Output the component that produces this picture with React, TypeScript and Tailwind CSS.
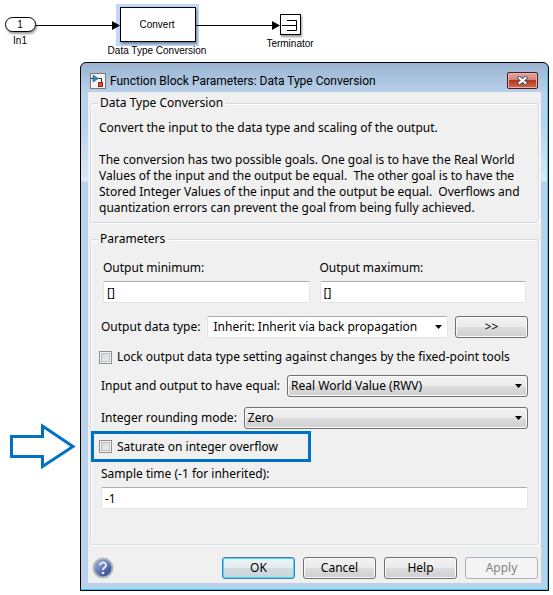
import type { ReactNode } from 'react';

function Diagram() {
  return (
    <svg className="block h-[62px] w-[330px] font-['Liberation_Sans',Arial,sans-serif] text-[10px]" viewBox="0 0 330 62" role="img" aria-label="Model diagram">
      <defs>
        <filter id="shadow" x="-20%" y="-20%" width="150%" height="160%">
          <feDropShadow dx="1" dy="2" stdDeviation="1" floodColor="#000" floodOpacity="0.4" />
        </filter>
      </defs>
      <rect x="116" y="4" width="83" height="42" fill="#bfd9fb" />
      <g fill="#fff" stroke="#000">
        <rect x="5.500" y="17.500" width="30" height="14" rx="7" filter="url(#shadow)" />
        <rect x="120.500" y="7.500" width="75" height="34" filter="url(#shadow)" />
        <rect x="280.500" y="14.500" width="20" height="20" filter="url(#shadow)" />
      </g>
      <path d="M36 25.500H113M196 25.500H273" stroke="#000" />
      <path d="M112 21L120 25.500L112 30ZM272 21L280 25.500L272 30Z" />
      <path d="M282 25.500H296M287 20.500H296.500V30.500H287" fill="none" stroke="#000" />
      <g textAnchor="middle" fill="#000">
        <text x="20" y="28">1</text>
        <text x="20" y="44">In1</text>
        <text x="157" y="28">Convert</text>
        <text x="157" y="54">Data Type Conversion</text>
        <text x="290" y="47">Terminator</text>
      </g>
    </svg>
  );
}

function Group({ title, className, children }: { title: string; className: string; children: ReactNode }) {
  return (
    <fieldset className={`min-w-0 rounded-[3px] border border-[#d2dce6] shadow-[inset_1px_1px_0_#fff,1px_1px_0_#fff] ${className}`}>
      <legend className="ml-[7px] h-4 bg-[#f0f0f0] px-[2px] leading-4">{title}</legend>
      {children}
    </fieldset>
  );
}

const grey = 'bg-[linear-gradient(#f2f2f2_0%,#ebebeb_49%,#dddddd_50%,#cfcfcf_100%)]';
const field = 'h-[22px] w-full rounded-[2px] border border-[#dfe3ea] border-t-[#abadb3] bg-white px-[3px]';

function Drop({ id, value, white }: { id: string; value: string; white?: boolean }) {
  return (
    <div className="relative min-w-0 flex-1">
      <select
        id={id}
        className={`block h-[22px] w-full appearance-none border ${
          white
            ? 'rounded-[2px] border-[#dfe3ea] border-t-[#abadb3] bg-white pl-[5px]'
            : `rounded-[3px] border-[#707070] pl-[3px] shadow-[inset_0_0_0_1px_#fafafa] ${grey}`
        }`}
      >
        <option>{value}</option>
      </select>
      <svg className="pointer-events-none absolute right-[6px] top-[9px] h-1 w-[7px]" viewBox="0 0 7 4">
        <path d="M0 0H7L3.500 4Z" />
      </svg>
    </div>
  );
}

function Check({ id }: { id: string }) {
  return (
    <input
      id={id}
      type="checkbox"
      className="size-[13px] shrink-0 appearance-none border border-[#8e8f8f] bg-[linear-gradient(135deg,#cbcfd5,#f6f6f6)] shadow-[inset_0_0_0_1px_#f4f4f4,inset_0_0_0_2px_#b9bdc4]"
    />
  );
}

function Push({ children, look }: { children: ReactNode; look: 'normal' | 'primary' | 'disabled' }) {
  const looks = {
    normal: `border-[#707070] shadow-[inset_0_0_0_1px_#fafafa] ${grey}`,
    primary:
      'border-[#3c7fb1] bg-[linear-gradient(#eef3f5_0%,#e3ebee_49%,#d2dde1_50%,#c8d4d8_100%)] shadow-[inset_0_0_0_1px_#48d8fb]',
    disabled: 'border-[#adb2b5] bg-[#f4f4f4] text-[#838383]',
  };
  return (
    <button type="button" disabled={look === 'disabled'} className={`h-[22px] w-[73px] shrink-0 rounded-[3px] border ${looks[look]}`}>
      {children}
    </button>
  );
}

function TitleBar() {
  return (
    <div className="flex h-[29px] items-center gap-1 pl-[2px] pr-[3px] pt-[6px] font-[Roboto,sans-serif]">
      <svg className="size-4" viewBox="0 0 16 16">
        <rect x="0.500" y="0.500" width="15" height="15" fill="#f4f4f4" stroke="#777" />
        <path d="M3 2L8.500 5.500L3 9Z" fill="#2a8cc0" stroke="#17506e" strokeWidth="0.500" />
        <path d="M1 5.500H3M8.500 5.500H11.500V9" fill="none" stroke="#222" />
        <rect x="8.500" y="9.500" width="4" height="4" fill="#d9532c" stroke="#8e2c10" />
      </svg>
      <h1 className="flex-1">Function Block Parameters: Data Type Conversion</h1>
      <button
        type="button"
        aria-label="Close"
        className="flex h-[17px] w-[31px] items-center justify-center rounded-[2px] border border-[#4d1a20] bg-[linear-gradient(#e3a49b_0%,#d58478_48%,#b8361f_50%,#cc6a52_100%)] shadow-[inset_0_0_0_1px_#e9b3aa]"
      >
        <svg className="h-[9px] w-[11px]" viewBox="0 0 11 9">
          <path d="M2.500 2L8.500 7M8.500 2L2.500 7" stroke="#4c5468" strokeWidth="4" strokeLinecap="square" />
          <path d="M2.500 2L8.500 7M8.500 2L2.500 7" stroke="#fff" strokeWidth="2" strokeLinecap="square" />
        </svg>
      </button>
    </div>
  );
}

export default function App() {
  return (
    <main className="bg-white pb-1 font-['Noto_Sans','Open_Sans',sans-serif] text-[12px] leading-4 text-black">
      <Diagram />
      <div className="flex pr-1">
        <div className="w-20 shrink-0 pl-[9px] pt-[360px]">
          <svg className="h-[48px] w-[67px]" viewBox="0 0 67 48">
            <path d="M2.500 14.500H33.500V4L64 24.500L33.500 44.500V34.500H2.500Z" fill="#fff" stroke="#0072c6" strokeWidth="3" />
          </svg>
        </div>
        <section className="min-w-0 flex-1 rounded-t-[6px] border border-black bg-[linear-gradient(#9ab4d1_0px,#b9d1ea_30px,#b9d1ea_60px,#dce9f6_118px,#b9d1ea_119px)] px-[7px] pb-[7px] shadow-[inset_-1px_-1px_0_#2cd0ef]">
          <TitleBar />
          <div className="bg-[#f0f0f0] px-[2px] pb-1 pt-[3px]">
            <Group title="Data Type Conversion" className="pb-[6px]">
              <p className="mt-[9px] whitespace-pre-wrap pl-2">
                Convert the input to the data type and scaling of the output.
                <br />
                <br />
                The conversion has two possible goals. One goal is to have the Real World
                <br />
                {'Values of the input and the output be equal.  The other goal is to have the'}
                <br />
                {'Stored Integer Values of the input and the output be equal.  Overflows and'}
                <br />
                quantization errors can prevent the goal from being fully achieved.
              </p>
            </Group>
            <Group title="Parameters" className="mt-2 pb-[35px]">
              <div className="px-[10px]">
                <div className="mt-[13px] grid grid-cols-2 gap-[10px] px-[2px]">
                  <div>
                    <label htmlFor="min" className="block pb-[5px]">Output minimum:</label>
                    <input id="min" className={`block ${field}`} defaultValue="[]" />
                  </div>
                  <div>
                    <label htmlFor="max" className="block pb-[5px]">Output maximum:</label>
                    <input id="max" className={`block ${field}`} defaultValue="[]" />
                  </div>
                </div>
                <div className="mt-[13px] flex items-center gap-[7px]">
                  <label htmlFor="type">Output data type:</label>
                  <Drop id="type" value="Inherit: Inherit via back propagation" white />
                  <Push look="normal">&gt;&gt;</Push>
                </div>
                <div className="-ml-[2px] mt-[11px] flex items-center gap-[5px]">
                  <Check id="lock" />
                  <label htmlFor="lock">Lock output data type setting against changes by the fixed-point tools</label>
                </div>
                <div className="mt-[10px] flex items-center gap-[7px]">
                  <label htmlFor="equal">Input and output to have equal:</label>
                  <Drop id="equal" value="Real World Value (RWV)" />
                </div>
                <div className="mt-[10px] flex items-center gap-[7px]">
                  <label htmlFor="round">Integer rounding mode:</label>
                  <Drop id="round" value="Zero" />
                </div>
                <div className="-ml-[10px] mt-[2px] flex h-[31px] w-[220px] items-center gap-[5px] border-[3px] border-[#0072c6] pl-[5px]">
                  <Check id="saturate" />
                  <label htmlFor="saturate">Saturate on integer overflow</label>
                </div>
                <label htmlFor="sample" className="mt-1 block pb-[5px]">Sample time (-1 for inherited):</label>
                <input id="sample" className={`block ${field}`} defaultValue="-1" />
              </div>
            </Group>
            <div className="mt-3 flex items-center gap-2 pr-px">
              <button type="button" aria-label="Help topics" className="mr-auto pl-[2px]">
                <svg className="block size-[22px]" viewBox="0 0 22 22">
                  <defs>
                    <linearGradient id="ball" x1="0" y1="0" x2="1" y2="1">
                      <stop offset="0" stopColor="#a3b5de" />
                      <stop offset="0.600" stopColor="#566eae" />
                      <stop offset="1" stopColor="#22377c" />
                    </linearGradient>
                  </defs>
                  <circle cx="11" cy="11" r="9.500" fill="url(#ball)" stroke="#b4b8c2" strokeWidth="2" />
                  <path d="M8 8.500C8 4.500 14.500 4.800 14 8.500C13.700 10.500 11 10.500 11 13" fill="none" stroke="#e6ebf7" strokeWidth="2" />
                  <circle cx="11" cy="16" r="1.300" fill="#e6ebf7" />
                </svg>
              </button>
              <Push look="primary">OK</Push>
              <Push look="normal">Cancel</Push>
              <Push look="normal">Help</Push>
              <Push look="disabled">Apply</Push>
            </div>
          </div>
        </section>
      </div>
    </main>
  );
}
